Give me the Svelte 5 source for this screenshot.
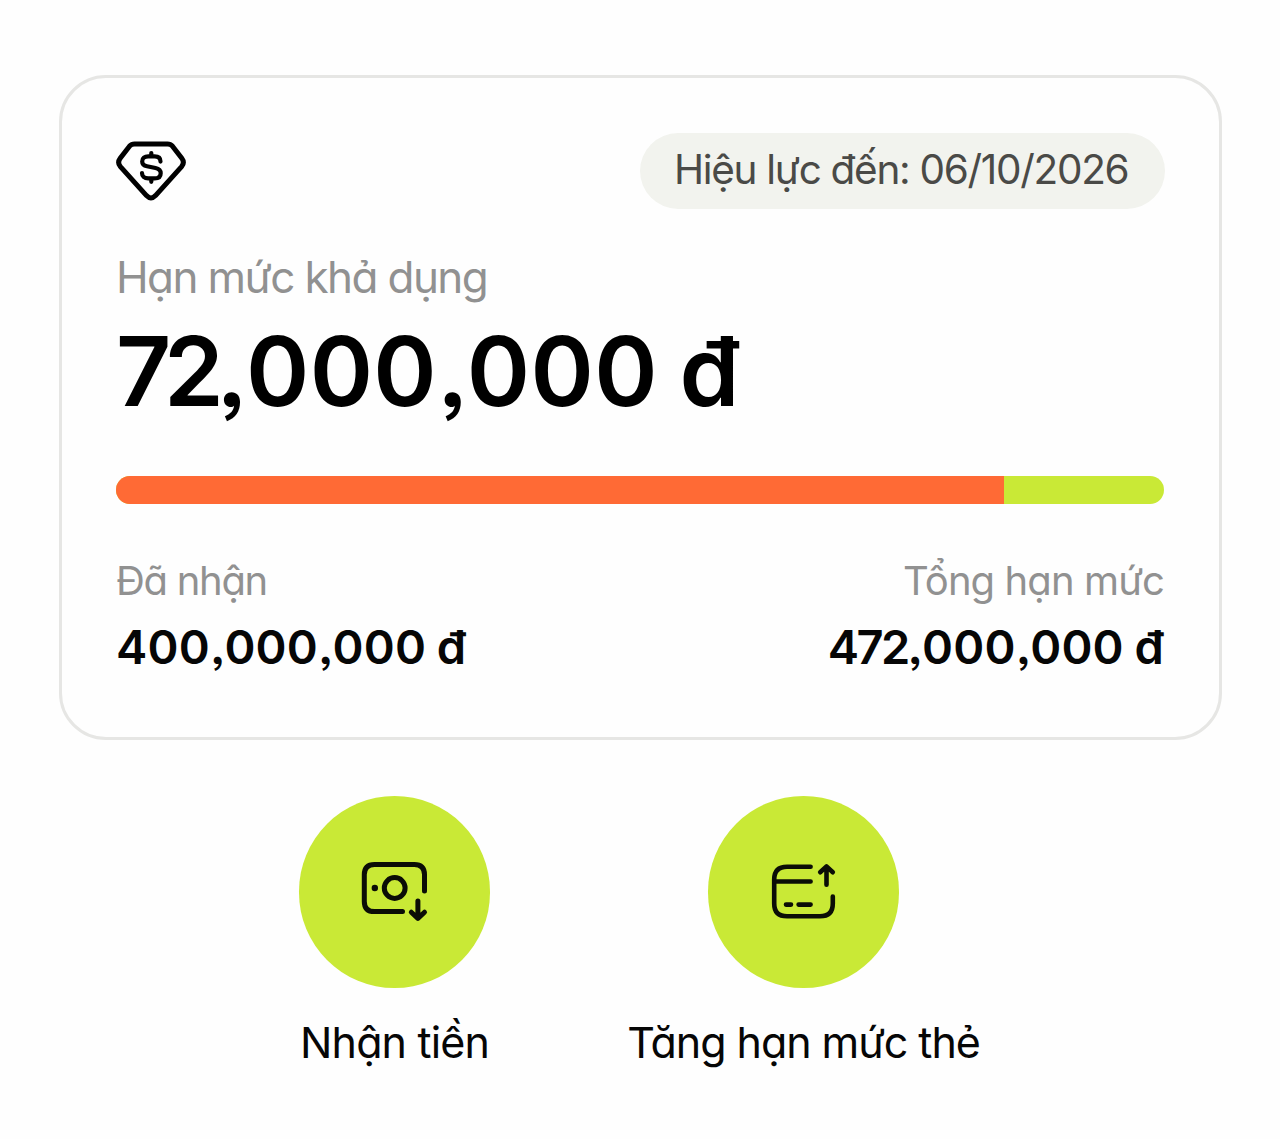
<script>
  const validUntil = '06/10/2026';
  const received = 400000000;
  const total = 472000000;

  const available = total - received;
  const usedPercent = (received / total) * 100;

  const moneyGroups = (amount) => amount.toLocaleString('en-US').split(',');
</script>

<!-- Thousands groups, split so the narrow digits can be set tighter -->
{#snippet money(amount)}
  {#each moneyGroups(amount) as group, i}{#if i > 0}<span class="comma">,</span>{/if}<span class:tight={group.includes('7')}>{group}</span>{/each}<span class="currency">{' đ'}</span>
{/snippet}

<main class="page">
  <section class="card">
    <div class="card-top">
      <!-- Diamond with dollar sign -->
      <svg class="gem" viewBox="0 0 70 60" fill="none" stroke="#000" stroke-linecap="round" stroke-linejoin="round">
        <path
          d="M18.5 2.9H51.5Q54.5 2.9 56.5 5.2L65.8 17.3Q69 21.6 65.6 25.6L39.5 54.6Q35 59.3 30.5 54.6L4.4 25.6Q1 21.6 4.2 17.3L13.5 5.2Q15.5 2.9 18.5 2.9Z"
          stroke-width="5"
        />
        <path
          d="M44.5 20.6C44.5 17.2 42.2 15.4 38.6 15.4H32.2C28.6 15.4 26.2 17.3 26.2 20.4C26.2 23.4 28 24.6 31 25.2L39.5 27C42.8 27.7 44.7 29.4 44.7 32.2C44.7 35.6 42.4 37.4 38.6 37.4H32.2C28.4 37.4 26 35.4 26 32M35.3 12V15.4M35.3 37.4V40.8"
          stroke-width="4.2"
        />
      </svg>
      <div class="pill">Hiệu lực đến: {validUntil}</div>
    </div>

    <div class="label">Hạn mức khả dụng</div>
    <div class="amount">{@render money(available)}</div>

    <div class="bar">
      <div class="bar-used" style="width: {usedPercent}%"></div>
    </div>

    <div class="stats">
      <div class="stat">
        <div class="stat-label received">Đã nhận</div>
        <div class="stat-value">{@render money(received)}</div>
      </div>
      <div class="stat right">
        <div class="stat-label">Tổng hạn mức</div>
        <div class="stat-value">{@render money(total)}</div>
      </div>
    </div>
  </section>

  <nav class="actions">
    <button class="action">
      <span class="circle">
        <svg viewBox="0 0 100 90" fill="none" stroke="#0b0d06" stroke-width="5" stroke-linecap="round" stroke-linejoin="round">
          <path d="M57.5 66.6H29.5Q19.3 66.6 19.3 56.4V29.6Q19.3 19.4 29.5 19.4H69.3Q79.5 19.4 79.5 29.6V46" />
          <circle cx="49.7" cy="43" r="10.4" />
          <circle cx="29.8" cy="43" r="3.2" fill="#0b0d06" stroke="none" />
          <path d="M72.9 56V73M66.3 67.2L72.9 73.4L79.5 67.2" />
        </svg>
      </span>
      <span class="action-label">Nhận tiền</span>
    </button>
    <button class="action">
      <span class="circle">
        <svg viewBox="0 0 100 90" fill="none" stroke="#0b0d06" stroke-width="4.6" stroke-linecap="round" stroke-linejoin="round">
          <path d="M56.6 21.8H33Q20.2 21.8 20.2 34.6V58.5Q20.2 71.3 33 71.3H66Q78.8 71.3 78.8 58.5V51.6" />
          <path d="M20.2 36.5H56.6M32 59.6H37M44.6 59.6H56.6M72.5 39.8V22M66.2 27.2L72.5 21.4L78.8 27.2" />
        </svg>
      </span>
      <span class="action-label wide">Tăng hạn mức thẻ</span>
    </button>
  </nav>
</main>

<style>
  :global(body) {
    margin: 0;
    background: #fefefe;
  }

  .page {
    box-sizing: border-box;
    height: 1139px;
    padding: 75px 58px 0 59px;
    font-family: Inter, 'Noto Sans', sans-serif;
    font-feature-settings: 'cv11', 'ss03';
    white-space: nowrap;
    color: #060606;
  }

  .card {
    box-sizing: border-box;
    height: 665px;
    padding: 55px 55px 0 54px;
    border: 3px solid #e6e6e4;
    border-radius: 47px;
  }

  .card-top {
    display: flex;
    justify-content: space-between;
    align-items: flex-start;
    margin-right: -1px;
  }

  .gem {
    width: 70px;
    height: 60px;
    margin-top: 8px;
  }

  .pill {
    box-sizing: border-box;
    width: 525px;
    height: 76px;
    padding-left: 34px;
    border-radius: 38px;
    background: #f2f3ee;
    color: #4a4a47;
    font-size: 40.5px;
    line-height: 73px;
    letter-spacing: -1.3px;
  }

  .label {
    margin-top: 40px;
    color: #919191;
    font-size: 44px;
    line-height: 56px;
    letter-spacing: -1.6px;
  }

  .amount {
    margin-top: 10px;
    color: #000;
    font-size: 96px;
    font-weight: 600;
    line-height: 112px;
    letter-spacing: 0.4px;
  }

  .amount .tight {
    letter-spacing: -7.4px;
  }

  .comma {
    margin: 0 -0.025em 0 0.01em;
  }

  .currency {
    margin-left: -0.03em;
    white-space: pre;
  }

  .bar {
    height: 28px;
    margin-top: 49px;
    border-radius: 14px;
    background: #c9e936;
    overflow: hidden;
  }

  .bar-used {
    height: 100%;
    background: #ff6a35;
  }

  .stats {
    display: flex;
    justify-content: space-between;
    margin-top: 51px;
  }

  .right {
    text-align: right;
  }

  .stat-label {
    color: #919191;
    font-size: 40px;
    line-height: 51px;
    letter-spacing: -0.9px;
  }

  .stat-label.received {
    letter-spacing: -1.3px;
  }

  .stat-value {
    margin-top: 11px;
    font-size: 47px;
    font-weight: 600;
    line-height: 60px;
    letter-spacing: 0.2px;
  }

  .stat-value .tight {
    letter-spacing: -2.6px;
  }

  .actions {
    display: grid;
    grid-template-columns: 409px 409px;
    margin: 56px 0 0 131px;
  }

  .action {
    display: flex;
    flex-direction: column;
    align-items: center;
    padding: 0;
    border: none;
    background: none;
    color: inherit;
    font: inherit;
    font-feature-settings: inherit;
    cursor: pointer;
  }

  .circle {
    display: flex;
    justify-content: center;
    width: 191.5px;
    height: 191.5px;
    border-radius: 50%;
    background: #c9e936;
  }

  .circle svg {
    width: 100px;
    height: 90px;
    margin-top: 49px;
  }

  .action-label {
    margin-top: 26px;
    font-size: 43px;
    line-height: 56px;
    letter-spacing: -0.85px;
  }

  .action-label.wide {
    letter-spacing: -1.05px;
  }
</style>
